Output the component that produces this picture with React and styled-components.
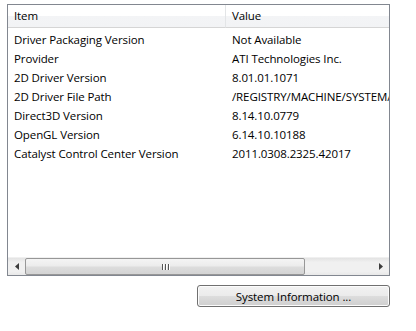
import React from 'react'
import styled, { createGlobalStyle } from 'styled-components'

const GlobalStyle = createGlobalStyle`
  html, body {
    margin: 0;
    padding: 0;
    background: #ffffff;
  }
  body {
    font-family: "Open Sans", "Noto Sans", sans-serif;
    font-size: 11.5px;
    letter-spacing: -0.1px;
    color: #000000;
  }
`

const Page = styled.div`
  width: 416px;
  height: 331px;
  padding: 4px 0 0 7px;
  box-sizing: border-box;
  display: flex;
  flex-direction: column;
  overflow: hidden;
`

const ListBox = styled.div`
  width: 383px;
  height: 272px;
  box-sizing: border-box;
  border: 1px solid #828790;
  display: flex;
  flex-direction: column;
  overflow: hidden;
  background: #ffffff;
`

const Viewport = styled.div`
  flex: 1;
  overflow: hidden;
`

const Grid = styled.div`
  display: grid;
  grid-template-columns: 218px 240px;
  width: 458px;
`

const HeaderCell = styled.div`
  height: 22px;
  line-height: 22px;
  padding-left: 6px;
  white-space: nowrap;
  color: #000;
  background: linear-gradient(to bottom, #ffffff 0%, #ffffff 50%, #f3f4f6 51%, #f2f3f5 100%);
  border-bottom: 1px solid #d5d5d5;
  border-right: ${p => (p.divider ? '1px solid #e3e5e7' : 'none')};
`

const Rows = styled.div`
  grid-column: 1 / -1;
  display: grid;
  grid-template-columns: 218px 240px;
  padding-top: 2px;
`

const Cell = styled.div`
  height: 19px;
  line-height: 19px;
  padding-left: 6px;
  white-space: nowrap;
  overflow: hidden;
`

const ScrollBar = styled.div`
  height: 17px;
  display: flex;
  align-items: stretch;
  background: linear-gradient(to bottom, #e3e3e3 0%, #f0f0f0 25%, #f0f0f0 80%, #e8e8e8 100%);
  border-top: 1px solid #f0f0f0;
`

const ArrowButton = styled.div`
  width: 17px;
  display: flex;
  align-items: center;
  justify-content: center;
`

const Track = styled.div`
  flex: 1;
  display: flex;
  padding: 0 67px 0 0;
`

const Thumb = styled.div`
  flex: 1;
  box-sizing: border-box;
  border: 1px solid #979797;
  border-radius: 2px;
  background: linear-gradient(to bottom, #f4f4f4 0%, #ececec 45%, #dcdcdc 55%, #d4d4d4 100%);
  display: flex;
  align-items: center;
  justify-content: center;
`

const Grip = styled.div`
  display: flex;
  gap: 2px;
  & > span {
    width: 1px;
    height: 6px;
    background: #555;
    box-shadow: 1px 0 0 #fff;
  }
`

const Footer = styled.div`
  display: flex;
  justify-content: flex-end;
  width: 383px;
  padding-top: 9px;
`

const Button = styled.button`
  width: 193px;
  height: 22px;
  box-sizing: border-box;
  border: 1px solid #707070;
  border-radius: 3px;
  background: linear-gradient(to bottom, #f2f2f2 0%, #ebebeb 50%, #dddddd 51%, #cfcfcf 100%);
  box-shadow: inset 0 0 0 1px #fcfcfc;
  font-family: inherit;
  font-size: 11.5px;
  letter-spacing: -0.1px;
  color: #000;
  padding: 0;
`

const items = [
  ['Driver Packaging Version', 'Not Available'],
  ['Provider', 'ATI Technologies Inc.'],
  ['2D Driver Version', '8.01.01.1071'],
  ['2D Driver File Path', '/REGISTRY/MACHINE/SYSTEM/ControlSet001'],
  ['Direct3D Version', '8.14.10.0779'],
  ['OpenGL Version', '6.14.10.10188'],
  ['Catalyst Control Center Version', '2011.0308.2325.42017'],
]

const Arrow = ({ dir }) => (
  <svg width="4" height="7" viewBox="0 0 4 7">
    {dir === 'left'
      ? <path d="M4 0 L0 3.5 L4 7 Z" fill="#3c3c3c" />
      : <path d="M0 0 L4 3.5 L0 7 Z" fill="#3c3c3c" />}
  </svg>
)

const App = () => (
  <Page>
    <GlobalStyle />
    <ListBox>
      <Viewport>
        <Grid>
          <HeaderCell divider>Item</HeaderCell>
          <HeaderCell>Value</HeaderCell>
          <Rows>
            {items.map(([k, v]) => (
              <React.Fragment key={k}>
                <Cell>{k}</Cell>
                <Cell>{v}</Cell>
              </React.Fragment>
            ))}
          </Rows>
        </Grid>
      </Viewport>
      <ScrollBar>
        <ArrowButton><Arrow dir="left" /></ArrowButton>
        <Track>
          <Thumb>
            <Grip><span /><span /><span /></Grip>
          </Thumb>
        </Track>
        <ArrowButton><Arrow dir="right" /></ArrowButton>
      </ScrollBar>
    </ListBox>
    <Footer>
      <Button>System Information ...</Button>
    </Footer>
  </Page>
)

export default App
